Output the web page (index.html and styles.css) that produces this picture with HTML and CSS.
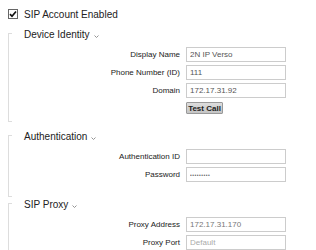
FILE: index.html
```html
<!DOCTYPE html>
<html lang="en">
<head>
  <meta charset="UTF-8">
  <title>SIP Account</title>
  <link rel="stylesheet" href="styles.css">
</head>
<body>
  <label class="enable">
    <span class="check">
      <svg width="8" height="8" viewBox="0 0 8 8"><path d="M1 4.2 L3 6.3 L7 1.5" fill="none" stroke="#111" stroke-width="1.7"/></svg>
    </span>
    SIP Account Enabled
  </label>

  <section class="group">
    <h2 class="group-title">Device Identity <svg class="caret" width="5" height="3" viewBox="0 0 5 3"><path d="M0.5 0.5 L2.5 2.5 L4.5 0.5" fill="none" stroke="#888" stroke-width="0.9"/></svg></h2>
    <div class="fields">
      <label for="display-name">Display Name</label>
      <input id="display-name" value="2N IP Verso">
      <label for="phone-number">Phone Number (ID)</label>
      <input id="phone-number" value="111">
      <label for="domain">Domain</label>
      <input id="domain" value="172.17.31.92">
      <span></span>
      <button class="test-call">Test Call</button>
    </div>
  </section>

  <section class="group group-auth">
    <h2 class="group-title">Authentication <svg class="caret" width="5" height="3" viewBox="0 0 5 3"><path d="M0.5 0.5 L2.5 2.5 L4.5 0.5" fill="none" stroke="#888" stroke-width="0.9"/></svg></h2>
    <div class="fields">
      <label for="auth-id">Authentication ID</label>
      <input id="auth-id" value="">
      <label for="password">Password</label>
      <input id="password" class="secret" type="password" value="secret123">
    </div>
  </section>

  <section class="group group-proxy">
    <h2 class="group-title">SIP Proxy <svg class="caret" width="5" height="3" viewBox="0 0 5 3"><path d="M0.5 0.5 L2.5 2.5 L4.5 0.5" fill="none" stroke="#888" stroke-width="0.9"/></svg></h2>
    <div class="fields">
      <label for="proxy-address">Proxy Address</label>
      <input id="proxy-address" class="dim" value="172.17.31.170">
      <label for="proxy-port">Proxy Port</label>
      <input id="proxy-port" placeholder="Default">
    </div>
  </section>
</body>
</html>
```

FILE: styles.css
```css
body {
  margin: 0;
  padding: 0 8px;
  background: #fff;
  color: #222;
  font-family: "Liberation Sans", Arial, Helvetica, sans-serif;
}
.enable {
  display: flex;
  align-items: center;
  gap: 6px;
  height: 28px;
  font-size: 10px;
}
.check {
  box-sizing: border-box;
  width: 10px;
  height: 10px;
  border: 1px solid #666;
  display: flex;
  align-items: center;
  justify-content: center;
}
.group {
  position: relative;
  padding-bottom: 8px;
}
.group::before {
  content: "";
  position: absolute;
  left: 0;
  top: 5px;
  bottom: 0;
  width: 3px;
  border: 1px solid #ddd;
  border-right: none;
}
.group-auth {
  margin-top: 8px;
  padding-bottom: 15px;
}
.group-proxy {
  margin-top: 1px;
}
.group-title {
  margin: 0;
  padding-left: 16px;
  display: flex;
  align-items: center;
  gap: 4px;
  font-size: 10px;
  font-weight: normal;
  line-height: 14px;
  color: #222;
}
.caret {
  margin-top: 2px;
}
.fields {
  display: grid;
  grid-template-columns: 172px 100px;
  column-gap: 6px;
  row-gap: 3px;
  align-items: center;
  margin-top: 5px;
}
.fields label {
  text-align: right;
  font-size: 8px;
  color: #222;
}
.fields input {
  box-sizing: border-box;
  width: 100px;
  height: 15px;
  margin: 0;
  padding: 0 3px;
  border: 1px solid #ccc;
  border-radius: 0;
  font-family: "Liberation Sans", Arial, Helvetica, sans-serif;
  font-size: 8px;
  color: #555;
  outline: none;
}
.fields input.secret {
  font-size: 5px;
  letter-spacing: 0.5px;
  color: #666;
}
.fields input.dim {
  color: #777;
}
.fields input::placeholder {
  color: #aaa;
}
.test-call {
  box-sizing: border-box;
  width: 37px;
  height: 12px;
  margin-top: 1px;
  padding: 0;
  border: 1px solid #999;
  border-radius: 1px;
  background: linear-gradient(#ddd, #c4c4c4);
  font-family: "Liberation Sans", Arial, Helvetica, sans-serif;
  font-size: 8px;
  font-weight: bold;
  color: #222;
  cursor: pointer;
}
```
